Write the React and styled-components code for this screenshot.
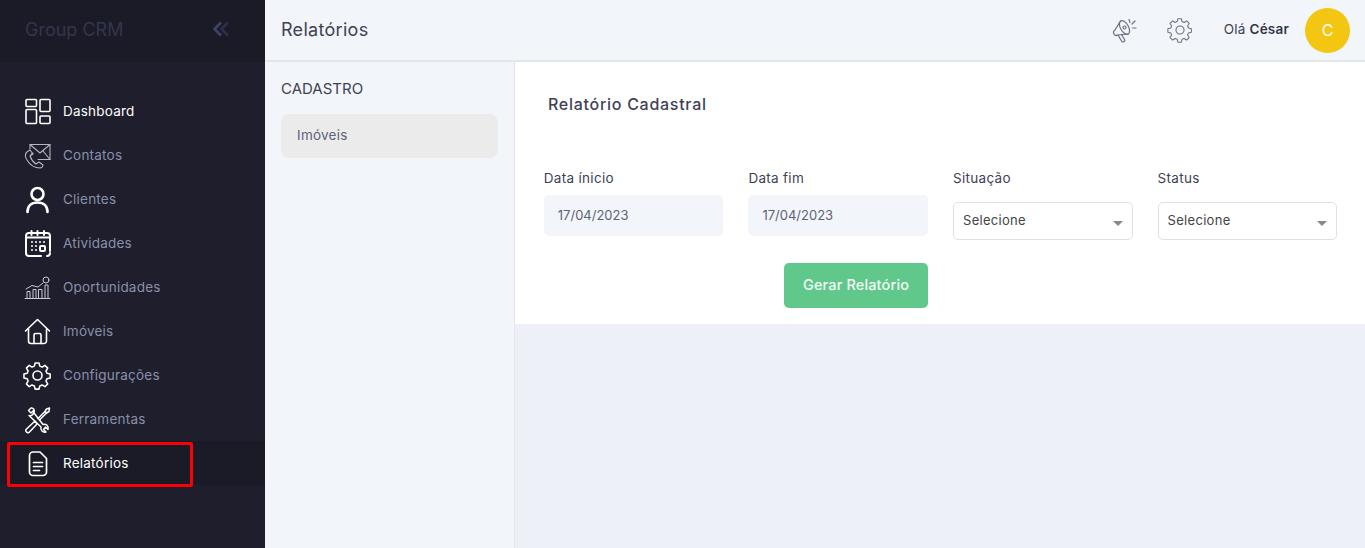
import React from "react"
import styled, { createGlobalStyle } from "styled-components"

const GlobalStyle = createGlobalStyle`
  html, body { margin: 0; padding: 0; height: 100%; }
  body { font-family: Inter, "Open Sans", sans-serif; background: #eef0f8; overflow: hidden; }
  * { box-sizing: border-box; }
`

const Page = styled.div`
  display: flex;
  width: 100%;
  height: 548px;
`

const Sidebar = styled.aside`
  position: relative;
  flex: 0 0 265px;
  background: #1e1e2d;
`

const Brand = styled.div`
  display: flex;
  align-items: center;
  justify-content: space-between;
  height: 62px;
  padding: 0 35px 4px 25px;
  background: #1b1b28;
`

const BrandName = styled.span`
  font-size: 18px;
  color: #33364a;
`

const Menu = styled.nav`
  display: flex;
  flex-direction: column;
  padding-top: 27px;
`

const MenuItem = styled.a`
  display: flex;
  align-items: center;
  gap: 11px;
  height: 44px;
  padding-left: 23px;
  font-size: 13.5px;
  letter-spacing: 0.22px;
  color: ${p => (p.$light ? "#ffffff" : "#8a8fa8")};
  background: ${p => (p.$active ? "#1b1b28" : "transparent")};
`

const MenuIcon = styled.svg`
  flex: 0 0 29px;
  width: 29px;
  height: 29px;
  fill: none;
  stroke: ${p => p.$stroke || "#ffffff"};
  stroke-width: ${p => p.$weight || 1.6};
  stroke-linecap: round;
  stroke-linejoin: round;
`

const Highlight = styled.div`
  position: absolute;
  left: 7px;
  top: 442px;
  width: 186px;
  height: 45px;
  border: 3px solid #fb0007;
  border-radius: 2px;
  pointer-events: none;
`

const Main = styled.div`
  flex: 1;
  display: flex;
  flex-direction: column;
  min-width: 0;
`

const Topbar = styled.header`
  display: flex;
  align-items: center;
  height: 62px;
  padding: 0 15px 0 16px;
  background: #f2f5f9;
  border-bottom: 2px solid #e3e6ea;
`

const PageTitle = styled.h1`
  flex: 1;
  margin: 0;
  padding-bottom: 1px;
  font-size: 18px;
  letter-spacing: 0.3px;
  font-weight: 400;
  color: #3f4254;
`

const TopIcon = styled.svg`
  width: 26px;
  height: 26px;
  fill: none;
  stroke: #6d7080;
  stroke-width: 1.2;
  stroke-linecap: round;
  stroke-linejoin: round;
  margin-right: ${p => p.$gap}px;
`

const Greeting = styled.span`
  padding-bottom: 2px;
  font-size: 13.5px;
  letter-spacing: 0.2px;
  color: #3f4254;
  margin-right: 16px;
  b { font-weight: 600; color: #33354a; }
`

const Avatar = styled.div`
  display: flex;
  align-items: center;
  justify-content: center;
  width: 45px;
  height: 45px;
  border-radius: 50%;
  background: #f2c611;
  color: #ffffff;
  font-size: 16px;
`

const Body = styled.div`
  flex: 1;
  display: flex;
  min-height: 0;
`

const SubNav = styled.div`
  flex: 0 0 250px;
  padding: 17px 16px 0 16px;
  background: #f2f5f9;
  border-right: 1px solid #e3e6ea;
`

const SubNavTitle = styled.div`
  font-size: 15px;
  line-height: 20px;
  color: #3f4254;
  margin-bottom: 15px;
`

const SubNavItem = styled.div`
  display: flex;
  align-items: center;
  height: 44px;
  padding: 0 0 2px 16px;
  border-radius: 8px;
  background: #ebebeb;
  font-size: 13.5px;
  letter-spacing: 0.25px;
  color: #5e6278;
`

const Content = styled.div`
  flex: 1;
  min-width: 0;
  background: #eef0f8;
`

const Card = styled.section`
  height: 262px;
  padding: 32px 27.8px 0 28.8px;
  background: #ffffff;
`

const CardTitle = styled.h2`
  margin: 0 0 53px 4.2px;
  font-size: 16px;
  line-height: 21px;
  letter-spacing: 0.72px;
  font-weight: 500;
  color: #3f4254;
`

const FormGrid = styled.form`
  display: grid;
  grid-template-columns: repeat(4, 1fr);
  column-gap: 25px;
  row-gap: 23px;
`

const Field = styled.label`
  display: flex;
  flex-direction: column;
  font-size: 13.5px;
  line-height: 20px;
  letter-spacing: 0.3px;
  color: #3f4254;
`

const LabelText = styled.span`
  margin-bottom: ${p => p.$gap}px;
`

const DateInput = styled.input`
  width: 100%;
  height: 41px;
  padding: 0 14px 2px;
  border: none;
  border-radius: 5px;
  outline: none;
  background: #f2f5f9;
  font: inherit;
  font-size: 13px;
  letter-spacing: 0;
  color: #5e6278;
`

const SelectBox = styled.div`
  position: relative;
  height: 38px;
  &::after {
    content: "";
    position: absolute;
    right: 10px;
    top: 19px;
    border-left: 5px solid transparent;
    border-right: 5px solid transparent;
    border-top: 5px solid #888888;
  }
`

const Select = styled.select`
  width: 100%;
  height: 100%;
  padding: 0 0 3px 9px;
  appearance: none;
  border: 1px solid #dfe1e5;
  border-radius: 5px;
  outline: none;
  background: #ffffff;
  font: inherit;
  font-size: 13px;
  letter-spacing: 0.3px;
  color: #444444;
`

const SubmitRow = styled.div`
  grid-column: 2;
  display: flex;
  justify-content: flex-end;
`

const SubmitButton = styled.button`
  width: 144px;
  height: 45px;
  padding: 0 0 2px;
  border: none;
  border-radius: 5px;
  background: #5fc88a;
  color: #f3fbf6;
  font: inherit;
  font-size: 14.5px;
  letter-spacing: 0.15px;
  font-weight: 500;
`

const gear = "M12.500 2.500h4l.8 3.300 2.400 1 2.900-1.800 2.900 2.900-1.800 2.900 1 2.400 3.300.8v4l-3.300.8-1 2.400 1.800 2.900-2.900 2.900-2.900-1.800-2.400 1-.8 3.300h-4l-.8-3.300-2.400-1-2.900 1.800-2.900-2.900 1.800-2.900-1-2.400-3.300-.8v-4l3.300-.8 1-2.400-1.800-2.900 2.900-2.900 2.900 1.800 2.400-1z"

const menu = [
  {
    label: "Dashboard",
    light: true,
    icon: (
      <>
        <rect x="3" y="2.500" width="10.500" height="7" rx="1" />
        <rect x="17" y="2.500" width="10" height="12" rx="1" />
        <rect x="3" y="12.500" width="10.500" height="14" rx="1" />
        <rect x="17" y="19" width="10" height="7.500" rx="1" />
      </>
    ),
  },
  {
    label: "Contatos",
    stroke: "#b4b6c2",
    weight: 1.1,
    icon: (
      <>
        <path d="M7 8V3.500h20v15H15" />
        <path d="M7 3.500l10 8.500 10-8.500M10 12l-2 1.500M27 18.500L20 10" />
        <path d="M7 9C2 11 1 15 4 19c3 5 8 8 13 8 2 0 3-2 3-3l-4-3-3 2c-3-2-5-5-6-8l3-2z" />
      </>
    ),
  },
  {
    label: "Clientes",
    weight: 2.6,
    icon: (
      <>
        <circle cx="14.500" cy="9" r="6" />
        <path d="M4.500 27c0-6 4-9.500 10-9.500s10 3.500 10 9.500" />
      </>
    ),
  },
  {
    label: "Atividades",
    weight: 2,
    icon: (
      <>
        <path d="M18 27H6a3 3 0 0 1-3-3V7a3 3 0 0 1 3-3h18a3 3 0 0 1 3 3v15" />
        <path d="M27 24c0 2-1 3-3 3M8.500 2v4M14.500 2v4M21 2v4M3 8.500h24" />
        <path d="M9 13v.1M13 13v.1M17 13v.1M21 13v.1M9 17v.1M13 17v.1M9 21v.1M13 21v.1" />
        <rect x="17" y="17" width="5" height="5" rx="1" />
      </>
    ),
  },
  {
    label: "Oportunidades",
    stroke: "#c9cbd3",
    weight: 1,
    icon: (
      <>
        <path d="M2 25.500h25M4 25.500v-7h3v7M10 25.500v-9h3v9M15.500 25.500v-9h3.500v9M22 25.500V12h3v13.500" />
        <path d="M3 16l6-3.500 6 1.500 5-4" />
        <circle cx="23" cy="7" r="3" />
      </>
    ),
  },
  {
    label: "Imóveis",
    icon: (
      <>
        <path d="M2.500 14L14.500 2.500 26.500 14" />
        <path d="M5.500 12v12a2.500 2.500 0 0 0 2.500 2.500h13a2.500 2.500 0 0 0 2.500-2.500V12" />
        <path d="M11 26.500V18a1.500 1.500 0 0 1 1.500-1.500h4A1.500 1.500 0 0 1 18 18v8.500" />
      </>
    ),
  },
  {
    label: "Configurações",
    icon: (
      <>
        <circle cx="14.500" cy="14.500" r="4.500" />
        <path d={gear} transform="translate(0 -.5) scale(.97)" />
      </>
    ),
  },
  {
    label: "Ferramentas",
    weight: 1.5,
    icon: (
      <>
        <path d="M8 3L5.500 5.500 8 8l2.500-2.500c1 3-1.500 6-4.500 5L18 22c-1 3 2 6 5 5l-2.500-2.500 2-2.500 2.500 2.500c1-3.500-2-6-5-5L11 8c1-3-.5-5.500-3-5z" />
        <path d="M26.500 3l-3 1-1.500 2.500 1.500 1.500 2.500-1.500z" />
        <path d="M22 6.500l-7 7M23.500 8l-6.500 6.500" />
        <path d="M12 16l-8.500 8a2 2 0 0 0 3 3L14 19z" />
      </>
    ),
  },
  {
    label: "Relatórios",
    light: true,
    active: true,
    weight: 1.7,
    icon: (
      <>
        <path d="M10 3h7l6.500 6.500V23a3.500 3.500 0 0 1-3.500 3.500H10A3.500 3.500 0 0 1 6.500 23V6.500A3.500 3.500 0 0 1 10 3z" />
        <path d="M10.500 13.500h9M10.500 17.500h9M10.500 21.500h6" />
      </>
    ),
  },
]

const App = () => {
  return (
    <Page>
      <GlobalStyle />
      <Sidebar>
        <Brand>
          <BrandName>Group CRM</BrandName>
          <svg width="18" height="16" viewBox="0 0 18 16" fill="none" strokeWidth="2.600">
            <path d="M16 1.500L9.500 8 16 14.500" stroke="#2e3049" />
            <path d="M9 1.500L2.500 8 9 14.500" stroke="#3f4366" />
          </svg>
        </Brand>
        <Menu>
          {menu.map(item => (
            <MenuItem key={item.label} $light={item.light} $active={item.active}>
              <MenuIcon viewBox="0 0 29 29" $stroke={item.stroke} $weight={item.weight}>
                {item.icon}
              </MenuIcon>
              {item.label}
            </MenuItem>
          ))}
        </Menu>
        <Highlight />
      </Sidebar>
      <Main>
        <Topbar>
          <PageTitle>Relatórios</PageTitle>
          <TopIcon viewBox="0 0 26 26" $gap={29}>
            <ellipse cx="12.500" cy="10.500" rx="4" ry="7.500" transform="rotate(-30 12.500 10.500)" />
            <path d="M8.500 4L3 13a2.800 2.800 0 0 0 3 5l10-1" />
            <circle cx="12.500" cy="10.500" r="1.500" />
            <path d="M6 18l3.500 6a1.600 1.600 0 0 0 3-1.500l-3-5" />
            <path d="M17 2.500l1 3M20 7l3-3M20.500 11h3.500" />
          </TopIcon>
          <TopIcon viewBox="0 0 29 29" $gap={31}>
            <circle cx="14.500" cy="14.500" r="4.500" />
            <path d={gear} transform="translate(0 -.5) scale(.97)" />
          </TopIcon>
          <Greeting>Olá <b>César</b></Greeting>
          <Avatar>C</Avatar>
        </Topbar>
        <Body>
          <SubNav>
            <SubNavTitle>CADASTRO</SubNavTitle>
            <SubNavItem>Imóveis</SubNavItem>
          </SubNav>
          <Content>
            <Card>
              <CardTitle>Relatório Cadastral</CardTitle>
              <FormGrid>
                <Field>
                  <LabelText $gap={7}>Data ínicio</LabelText>
                  <DateInput readOnly value="17/04/2023" />
                </Field>
                <Field>
                  <LabelText $gap={7}>Data fim</LabelText>
                  <DateInput readOnly value="17/04/2023" />
                </Field>
                <Field>
                  <LabelText $gap={14}>Situação</LabelText>
                  <SelectBox>
                    <Select><option>Selecione</option></Select>
                  </SelectBox>
                </Field>
                <Field>
                  <LabelText $gap={14}>Status</LabelText>
                  <SelectBox>
                    <Select><option>Selecione</option></Select>
                  </SelectBox>
                </Field>
                <SubmitRow>
                  <SubmitButton type="button">Gerar Relatório</SubmitButton>
                </SubmitRow>
              </FormGrid>
            </Card>
          </Content>
        </Body>
      </Main>
    </Page>
  )
}

export default App
